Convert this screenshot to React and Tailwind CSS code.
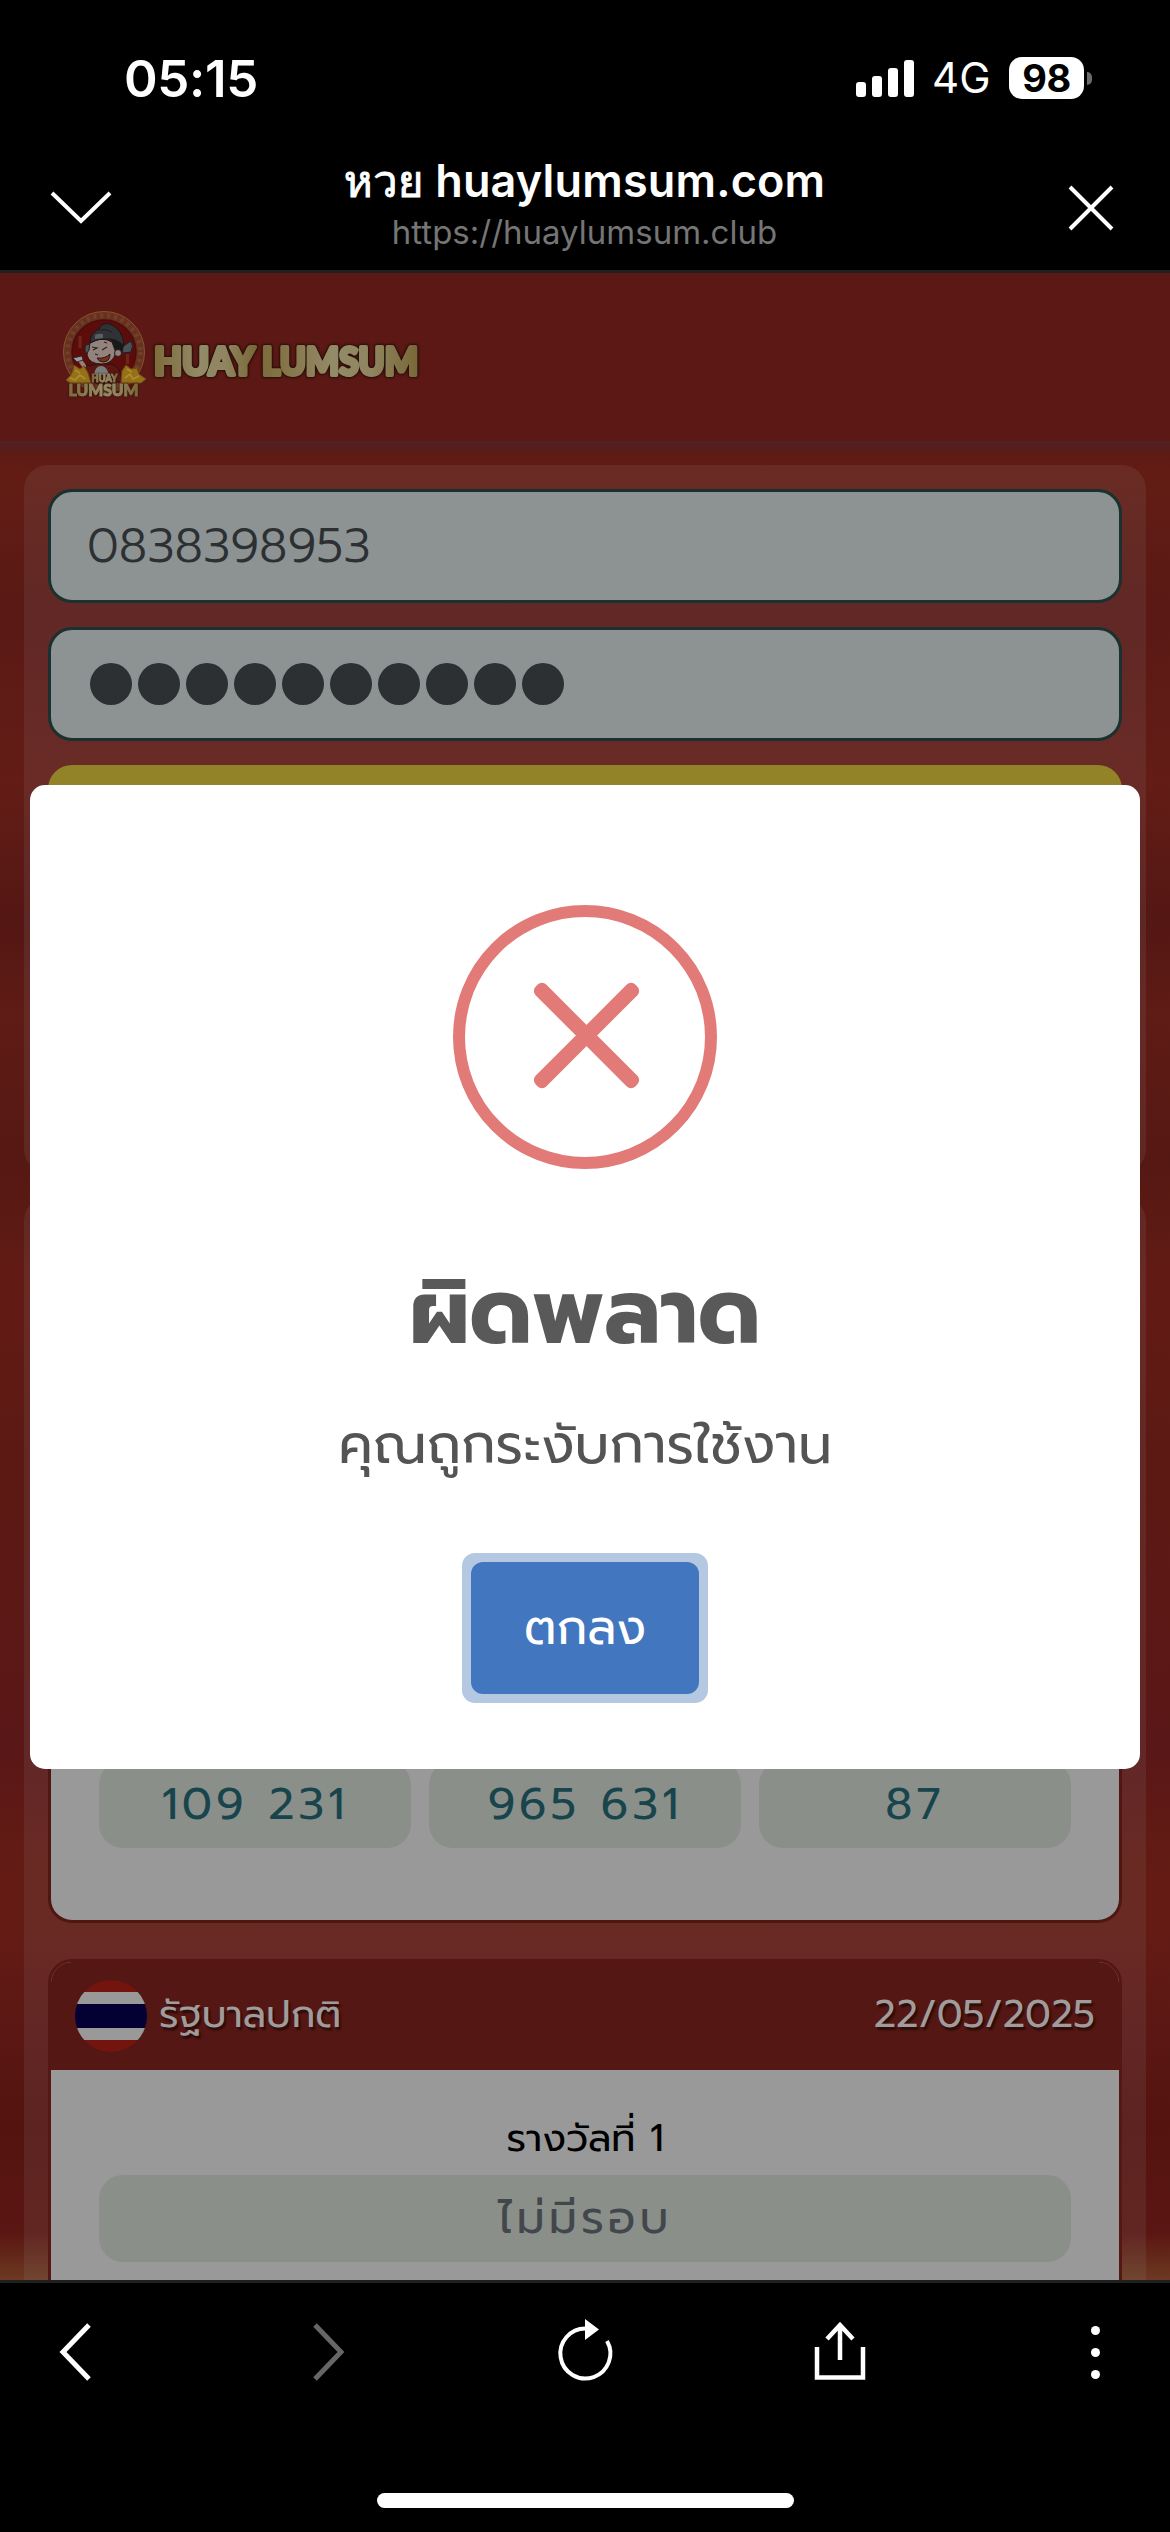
const PRIZES = ["109 231", "965 631", "87"];

function StatusBar() {
  return (
    <div className="flex h-[156px] items-center justify-between pl-[124px] pr-[78px]">
      <span className="text-[51px] leading-none font-semibold tracking-[-0.3px] text-white">05:15</span>
      <div className="flex items-center">
        <div className="flex items-end gap-1.5">
          <span className="h-[15px] w-[10px] rounded-[3px] bg-white" />
          <span className="h-[21px] w-[10px] rounded-[3px] bg-white" />
          <span className="h-[29px] w-[10px] rounded-[3px] bg-white" />
          <span className="h-[37px] w-[10px] rounded-[3px] bg-white" />
        </div>
        <span className="ml-[18px] w-[60px] text-[42px] leading-none text-white">4G</span>
        <span className="ml-[17px] flex h-[42px] w-[75px] items-center justify-center rounded-[13px] bg-white text-[38px] leading-none font-bold tracking-[-0.5px] text-black">
          98
        </span>
        <span className="ml-[3px] h-[13px] w-[5px] rounded-r-full bg-[#6b6b6b]" />
      </div>
    </div>
  );
}

function TitleBar() {
  return (
    <div className="flex h-[114px] items-start justify-between px-[48px]">
      <svg className="mt-[32px] h-[40px] w-[66px]" viewBox="0 0 66 40" fill="none" stroke="#fff" strokeWidth="4">
        <path d="M4 5 L33 33 L62 5" />
      </svg>
      <div className="-mt-[3px] mr-[11px] flex flex-col items-center">
        <p className="text-[45px] leading-[54px] font-semibold tracking-[0.15px] whitespace-nowrap text-white">
          <span className="font-['Noto_Sans','Loma',sans-serif] text-[44px] font-medium [-webkit-text-stroke:0.8px_#fff]">หวย</span> huaylumsum.com
        </p>
        <p className="text-[33px] leading-[48px] text-[#757575]">https://huaylumsum.club</p>
      </div>
      <svg className="mt-[27px] mr-[6px] h-[50px] w-[50px]" viewBox="0 0 50 50" fill="none" stroke="#fff" strokeWidth="4">
        <path d="M4 4 L46 46 M46 4 L4 46" />
      </svg>
    </div>
  );
}

function Logo() {
  return (
    <svg className="h-[120px] w-[380px]" viewBox="50 300 380 120">
      <defs>
        <linearGradient id="gold" x1="0" x2="1" y1="0" y2="0">
          <stop offset="0" stopColor="#7d6b3b" />
          <stop offset="0.45" stopColor="#938a67" />
          <stop offset="0.7" stopColor="#8f855f" />
          <stop offset="1" stopColor="#796838" />
        </linearGradient>
      </defs>
      {/* round emblem */}
      <circle cx="104" cy="352" r="36.5" fill="#5c0c0b" stroke="#673120" strokeWidth="8.5" />
      <circle cx="104" cy="352" r="36.5" fill="none" stroke="#8a5636" strokeWidth="4.5" strokeDasharray="3 4" opacity="0.4" />
      <circle cx="104" cy="352" r="40.5" fill="none" stroke="#85552f" strokeWidth="1" />
      <circle cx="104" cy="352" r="32" fill="none" stroke="#4a0e0b" strokeWidth="1.5" />
      <path d="M80 336v12M127.5 354v10" stroke="#6b2818" strokeWidth="3" />
      {/* body and sleeves */}
      <path d="M84 382l2-17q5 2 10-1h16q9 3 10 18z" fill="#5b1513" stroke="#261313" strokeWidth="1" />
      <path d="M94 375q1-9 7-9t8 9z" fill="#7c7c7c" />
      <path d="M84 366l-5-7" stroke="#968078" strokeWidth="4" strokeLinecap="round" />
      <path d="M73 358l9-2 1 4-6 2z" fill="#9a9a9a" stroke="#222" strokeWidth="0.8" />
      {/* hat wings, head, hat */}
      <ellipse cx="88" cy="349" rx="3" ry="4.5" fill="#4b5558" stroke="#1d2022" strokeWidth="0.8" />
      <path d="M122 347l9-6q3 5 0 11l-8 1z" fill="#495356" stroke="#1d2022" strokeWidth="1" />
      <path d="M110 338h12q4 8-1 16h-7z" fill="#191919" />
      <path d="M90 343q12-7 22-1l4 11q-4 11-14 11-13 0-15-9 0-3 2-5z" fill="#94827d" stroke="#241c1a" strokeWidth="1" />
      <circle cx="118" cy="353" r="3.5" fill="#94827d" stroke="#241c1a" strokeWidth="1" />
      <path d="M90 343q0-10 9-14 3-7 11-5 13 5 14 22-8-8-17-7-9-1-17 4z" fill="#303235" stroke="#171819" strokeWidth="1" />
      <path d="M95 335q4-2 8-1v4l-8 1z" fill="#596063" />
      <path d="M99 330q7-2 13 2" stroke="#1b1c1e" strokeWidth="1" fill="none" />
      <path d="M92 347l5 1-4 2M102 350l5-3M104 342l3 1M95 354l3 1" stroke="#292320" strokeWidth="1.2" fill="none" />
      <path d="M97 358q8 1 13-4 0 8-7 8-4 0-6-4z" fill="#76301f" stroke="#2b1512" strokeWidth="1" />
      {/* gold ingots */}
      <path d="M66 380l5-5 2-5 1-5 6 4 4-3 4 7 3 10H70zM121 383l1-12 4-6 5 4 6-1 2 6 7 5-5 4z" fill="#957019" stroke="#6c4a12" strokeWidth="1" />
      <path d="M70 378l5 2 5-5 5 4M75 370l5 3M125 378l5-4 3 5 6-3M127 369l5 3" stroke="#ad8b2b" strokeWidth="1.8" fill="none" />
      <g className="font-['Lato',sans-serif] font-black" fill="url(#gold)" stroke="url(#gold)" strokeWidth="1" strokeLinejoin="round">
        <g className="[filter:drop-shadow(0_0_1px_#2c1209)]">
          <text x="91.5" y="381.5" fontSize="11" textLength="26" lengthAdjust="spacingAndGlyphs">HUAY</text>
          <text x="68.5" y="395.5" fontSize="17" textLength="70" lengthAdjust="spacingAndGlyphs">LUMSUM</text>
        </g>
        {/* wordmark */}
        <g className="[filter:drop-shadow(0_0_1px_#1d0d06)_drop-shadow(0_0_1px_#1d0d06)]" fontSize="38" strokeWidth="4">
          <text x="154" y="374.5" textLength="101" lengthAdjust="spacingAndGlyphs">HUAY</text>
          <text x="262" y="374.5" textLength="156" lengthAdjust="spacingAndGlyphs">LUMSUM</text>
        </g>
      </g>
    </svg>
  );
}

function LoginPanel() {
  return (
    <section className="mx-6 flex h-[708px] shrink-0 flex-col gap-6 rounded-3xl bg-[#999999]/12 p-6">
      <div className="flex h-[114px] shrink-0 items-center rounded-3xl border-3 border-[#1a312f] bg-[#8d9392] px-[36px] text-[48px] leading-none font-light text-[#2c3033]">
        0838398953
      </div>
      <div className="flex h-[114px] shrink-0 items-center gap-1.5 rounded-3xl border-3 border-[#1a312f] bg-[#8d9392] px-[39px]">
        {Array.from({ length: 10 }, (_, i) => (
          <span key={i} className="size-[42px] rounded-full bg-[#2c3033]" />
        ))}
      </div>
      <div className="h-[114px] shrink-0 rounded-3xl bg-[#928329]" />
    </section>
  );
}

function ThaiFlag() {
  return (
    <span className="flex size-[72px] flex-col overflow-hidden rounded-full">
      <span className="h-3 bg-[#74140f]" />
      <span className="h-3 bg-[#999999]" />
      <span className="h-6 bg-[#050033]" />
      <span className="h-3 bg-[#999999]" />
      <span className="h-3 bg-[#74140f]" />
    </span>
  );
}

function ResultsPanel() {
  return (
    <section className="mx-6 flex shrink-0 flex-col gap-9 rounded-t-3xl bg-[#999999]/12 px-6 pt-6">
      <div className="flex h-[702px] shrink-0 flex-col justify-end rounded-3xl border-3 border-[#4f1612] bg-[#999999] px-12 pb-[72px]">
        <div className="grid grid-cols-3 gap-[18px]">
          {PRIZES.map((p) => (
            <div key={p} className="flex h-[87px] items-center justify-center rounded-3xl bg-[#8a8f8a] text-[45px] leading-none tracking-[4px] text-[#18444c]">
              {p}
            </div>
          ))}
        </div>
      </div>
      <div className="h-[400px] shrink-0 overflow-hidden rounded-3xl border-3 border-[#551713] bg-[#999999]">
        <div className="flex h-[108px] items-center justify-between bg-[#551713] px-6 text-[38.4px] leading-none text-[#a09c9c] [text-shadow:2px_3px_2px_rgba(0,0,0,0.5)]">
          <div className="flex items-center gap-3">
            <ThaiFlag />
            <span className="pb-[3px]">รัฐบาลปกติ</span>
          </div>
          <span className="pb-[3px]">22/05/2025</span>
        </div>
        <div className="px-12 pt-[41px] text-center">
          <p className="text-[38.4px] leading-[54px] text-black">รางวัลที่ 1</p>
          <div className="mt-[10px] flex h-[87px] items-center justify-center rounded-3xl bg-[#8a8f8a] text-[45px] leading-none tracking-[4px] text-[#42474c]">
            ไม่มีรอบ
          </div>
        </div>
      </div>
    </section>
  );
}

function ErrorDialog() {
  return (
    <div className="absolute top-[512px] left-[30px] flex h-[984px] w-[1110px] flex-col items-center rounded-[15px] bg-white pt-[120px]">
      <svg className="size-[264px]" viewBox="0 0 264 264" fill="#e27a77">
        <circle cx="132" cy="132" r="126" fill="none" stroke="#e27a77" strokeWidth="12" />
        <rect x="63" y="123" width="141" height="15" rx="6" transform="rotate(45 133.5 130.5)" />
        <rect x="63" y="123" width="141" height="15" rx="6" transform="rotate(-45 133.5 130.5)" />
      </svg>
      <h2 className="mt-[76px] text-[90px] leading-[136px] font-bold text-[#595959]">ผิดพลาด</h2>
      <p className="mt-[24px] text-[54px] leading-[80px] text-[#545454]">คุณถูกระงับการใช้งาน</p>
      <div className="mt-[68px] rounded-[13px] bg-[#b4c8e1] p-[9px]">
        <button className="block h-[132px] w-[228px] rounded-xl bg-[#4276be] text-[48px] leading-none text-white">
          ตกลง
        </button>
      </div>
    </div>
  );
}

function BottomBar() {
  return (
    <nav className="flex h-[252px] flex-col items-center border-t-3 border-[#202020] bg-black">
      <div className="flex h-[138px] w-full items-center justify-between px-[44px]">
        <svg className="h-[64px] w-[62px]" viewBox="0 0 62 64" fill="none" stroke="#fff" strokeWidth="5">
          <path d="M45 5 L19 32 L45 59" />
        </svg>
        <svg className="h-[64px] w-[62px]" viewBox="0 0 62 64" fill="none" stroke="#666" strokeWidth="5">
          <path d="M16 5 L42 32 L16 59" />
        </svg>
        <svg className="h-[66px] w-[62px]" viewBox="0 0 62 66" fill="none">
          <path d="M32 9.5 A25 25 0 1 0 53 22" stroke="#fff" strokeWidth="4" />
          <path d="M31 0 L45 10.5 L31 21 Z" fill="#fff" />
        </svg>
        <svg className="h-[64px] w-[62px]" viewBox="0 0 62 64" fill="none" stroke="#fff" strokeWidth="4.5">
          <path d="M8 27V57.5H54V27M31 5V40M18 19L31 5L44 19" />
        </svg>
        <div className="flex w-[62px] flex-col items-center gap-[13px]">
          <span className="size-[9px] rounded-full bg-white" />
          <span className="size-[9px] rounded-full bg-white" />
          <span className="size-[9px] rounded-full bg-white" />
        </div>
      </div>
      <div className="mt-[72px] h-[15px] w-[417px] rounded-full bg-white" />
    </nav>
  );
}

export default function App() {
  return (
    <div className="flex h-[2532px] w-[1170px] flex-col overflow-hidden bg-black font-['Inter',sans-serif]">
      <StatusBar />
      <TitleBar />
      <main className="relative flex h-[2010px] flex-col overflow-hidden border-t-3 border-[#202020] bg-[linear-gradient(180deg,#5c1813_0,#5c1813_168px,#621c14_200px,#5a1915_340px,#631c16_510px,#541714_650px,#5f1b15_740px,#561813_890px,#621b14_1010px,#5c1913_1180px,#5a1717_1480px,#621b14_1580px,#641b14_1650px,#5a1714_1770px,#54130f_1850px,#5a1612_1960px,#6c3a22_2007px)] font-['Prompt','Noto_Sans_Thai','Noto_Sans',sans-serif]">
        <header className="flex h-[168px] shrink-0 items-start bg-[#5b1815] pt-[27px] pl-[50px]">
          <Logo />
        </header>
        <div className="h-6 shrink-0 bg-linear-to-b from-[#522125] to-transparent to-60%" />
        <LoginPanel />
        <div className="h-6 shrink-0" />
        <ResultsPanel />
        <ErrorDialog />
      </main>
      <BottomBar />
    </div>
  );
}
